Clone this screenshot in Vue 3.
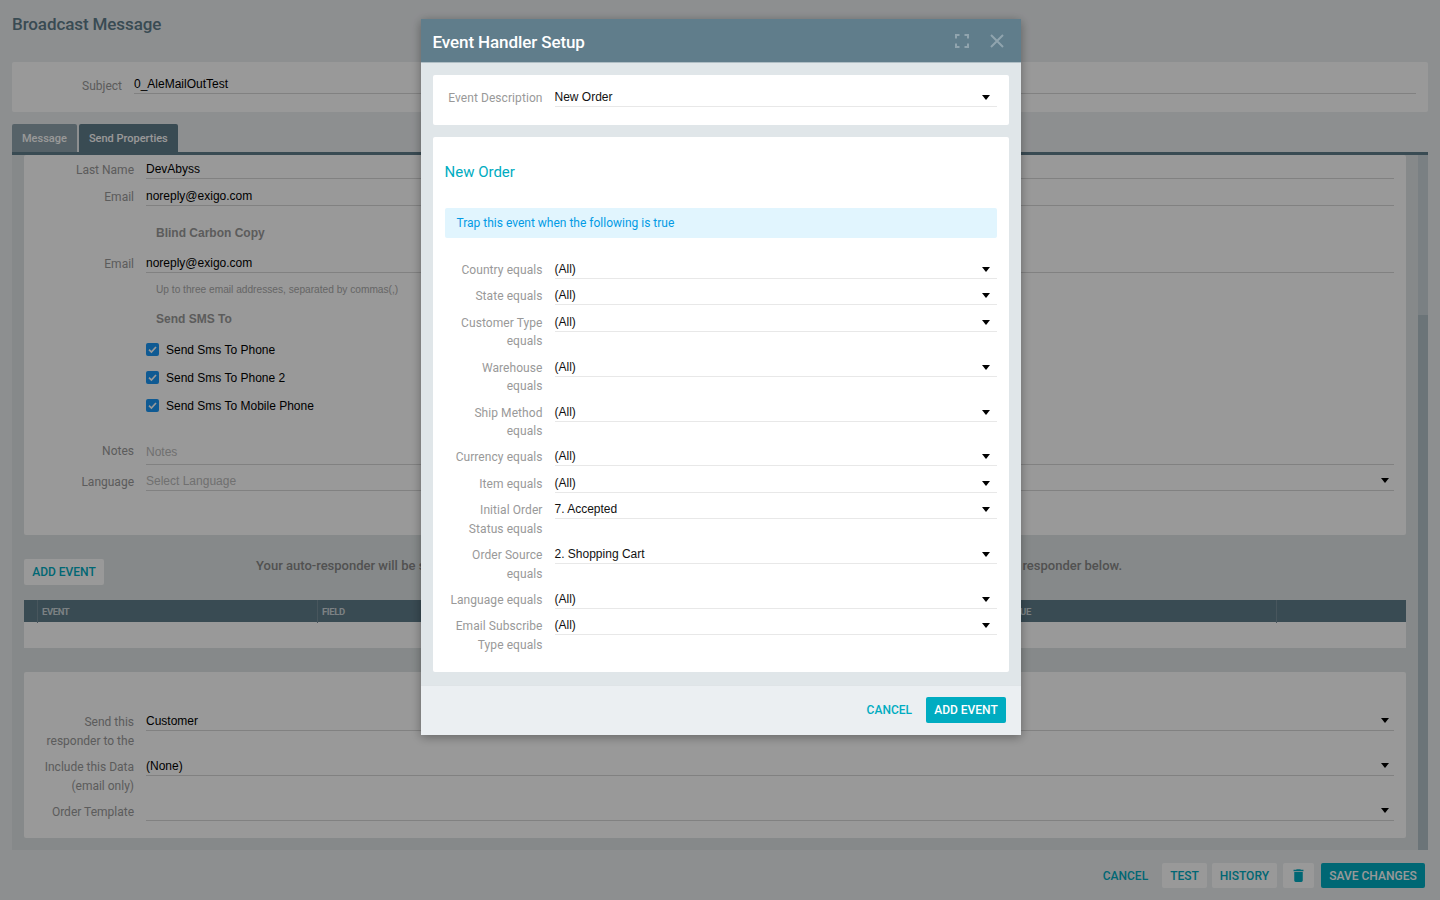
<script setup>
const backRows = [
  { label: 'Send this responder to the', value: 'Customer' },
  { label: 'Include this Data (email only)', value: '(None)' },
  { label: 'Order Template', value: '' }
]

const smsOptions = ['Send Sms To Phone', 'Send Sms To Phone 2', 'Send Sms To Mobile Phone']

const filters = [
  { label: 'Country equals', value: '(All)' },
  { label: 'State equals', value: '(All)' },
  { label: 'Customer Type equals', value: '(All)' },
  { label: 'Warehouse equals', value: '(All)' },
  { label: 'Ship Method equals', value: '(All)' },
  { label: 'Currency equals', value: '(All)' },
  { label: 'Item equals', value: '(All)' },
  { label: 'Initial Order Status equals', value: '7. Accepted' },
  { label: 'Order Source equals', value: '2. Shopping Cart' },
  { label: 'Language equals', value: '(All)' },
  { label: 'Email Subscribe Type equals', value: '(All)' }
]
</script>

<template>
  <div class="page">
    <h1 class="page-title">Broadcast Message</h1>

    <div class="subject-card">
      <label class="subject-label">Subject</label>
      <div class="line-input">0_AleMailOutTest</div>
    </div>

    <div class="tabs">
      <div class="tab">Message</div>
      <div class="tab active">Send Properties</div>
    </div>

    <div class="tab-body">
      <div class="scroll-area">
        <div class="card props-card">
          <div class="form-row">
            <label>Last Name</label>
            <div class="line-input">DevAbyss</div>
          </div>
          <div class="form-row">
            <label>Email</label>
            <div class="line-input">noreply@exigo.com</div>
          </div>
          <div class="section-title bcc">Blind Carbon Copy</div>
          <div class="form-row">
            <label>Email</label>
            <div class="line-input">noreply@exigo.com</div>
          </div>
          <div class="hint">Up to three email addresses, separated by commas(,)</div>
          <div class="section-title sms">Send SMS To</div>
          <div class="checks">
            <div v-for="opt in smsOptions" :key="opt" class="check-row">
              <span class="checkbox">
                <svg viewBox="0 0 13 13" width="13" height="13">
                  <path d="M3 6.700 5.400 9 10 4" fill="none" stroke="#fff" stroke-width="1.700" />
                </svg>
              </span>
              {{ opt }}
            </div>
          </div>
          <div class="form-row notes">
            <label>Notes</label>
            <div class="line-input placeholder">Notes</div>
          </div>
          <div class="form-row">
            <label>Language</label>
            <div class="line-input placeholder select">Select Language<i class="caret"></i></div>
          </div>
        </div>

        <div class="event-bar">
          <button class="btn btn-white">ADD EVENT</button>
          <div class="event-note">
            <span>Your auto-responder will be sent</span>
            <span>for this responder below.</span>
          </div>
        </div>

        <div class="event-table">
          <div class="table-head">
            <div class="th narrow"></div>
            <div class="th event">EVENT</div>
            <div class="th field">FIELD</div>
            <div class="th value">VALUE</div>
            <div class="th"></div>
          </div>
          <div class="table-empty"></div>
        </div>

        <div class="card responder-card">
          <div v-for="row in backRows" :key="row.label" class="form-row">
            <label>{{ row.label }}</label>
            <div class="line-input select">{{ row.value }}<i class="caret"></i></div>
          </div>
        </div>
      </div>
      <div class="scrollbar"><div class="thumb"></div></div>
    </div>

    <div class="page-actions">
      <button class="btn btn-text">CANCEL</button>
      <button class="btn btn-white">TEST</button>
      <button class="btn btn-white">HISTORY</button>
      <button class="btn btn-white trash">
        <svg viewBox="0 0 24 24" width="17" height="17">
          <path fill="#00acc1" d="M6 19a2 2 0 0 0 2 2h8a2 2 0 0 0 2-2V7H6v12zM19 4h-3.500l-1-1h-5l-1 1H5v2h14V4z" />
        </svg>
      </button>
      <button class="btn btn-primary save">SAVE CHANGES</button>
    </div>
  </div>

  <div class="overlay"></div>

  <div class="modal">
    <div class="modal-header">
      <span class="modal-title">Event Handler Setup</span>
      <svg class="modal-icon" viewBox="0 0 14 14" width="14" height="14">
        <path d="M1 4.500V1h3.500M9.500 1H13v3.500M13 9.500V13H9.500M4.500 13H1V9.500" fill="none" stroke="#90a4ae" stroke-width="2" />
      </svg>
      <svg class="modal-icon close" viewBox="0 0 14 14" width="14" height="14">
        <path d="M1 1l12 12M13 1 1 13" fill="none" stroke="#90a4ae" stroke-width="2" />
      </svg>
    </div>

    <div class="modal-body">
      <div class="modal-card desc-card">
        <div class="modal-row">
          <label>Event Description</label>
          <div class="modal-select">New Order<i class="caret"></i></div>
        </div>
      </div>

      <div class="modal-card filter-card">
        <h2 class="filter-title">New Order</h2>
        <div class="alert">Trap this event when the following is true</div>
        <div class="filter-list">
          <div v-for="f in filters" :key="f.label" class="modal-row">
            <label>{{ f.label }}</label>
            <div class="modal-select">{{ f.value }}<i class="caret"></i></div>
          </div>
        </div>
      </div>
    </div>

    <div class="modal-footer">
      <button class="btn btn-text">CANCEL</button>
      <button class="btn btn-primary">ADD EVENT</button>
    </div>
  </div>
</template>

<style>
html,
body {
  margin: 0;
  background: #eceff1;
}
</style>

<style scoped>
.page {
  height: 900px;
  box-sizing: border-box;
  padding: 0 12px;
  background: #eceff1;
  font-family: Roboto, "Liberation Sans", sans-serif;
  font-size: 12px;
  overflow: hidden;
}
.page-title {
  margin: 0;
  padding-top: 14px;
  height: 62px;
  box-sizing: border-box;
  font-size: 17px;
  line-height: 20px;
  font-weight: 500;
  letter-spacing: -0.1px;
  color: #607d8b;
}
.subject-card {
  display: grid;
  grid-template-columns: 110px 1fr;
  column-gap: 12px;
  height: 50px;
  box-sizing: border-box;
  padding: 13px 12px 0 0;
  background: #fff;
  border-radius: 2px;
}
.subject-label {
  text-align: right;
  color: #999;
  line-height: 19px;
  padding-top: 2px;
}
.tabs {
  display: flex;
  gap: 2px;
  margin-top: 12px;
  height: 28px;
}
.tab {
  padding: 0 10px;
  line-height: 29px;
  font-size: 11px;
  font-weight: 500;
  color: #fff;
  background: #90a4ae;
  border-radius: 2px 2px 0 0;
}
.tab.active {
  background: #607d8b;
}
.tab-body {
  display: flex;
  height: 698px;
  box-sizing: border-box;
  border-top: 3px solid #607d8b;
  background: #dfe5e6;
}
.scroll-area {
  flex: 1;
  padding: 0 12px;
  min-width: 0;
}
.scrollbar {
  width: 10px;
  background: #cbd5da;
  padding-top: 160px;
  box-sizing: border-box;
}
.thumb {
  height: 100%;
  background: #b2c1c8;
}
.card {
  background: #fff;
  border-radius: 2px;
}
.props-card {
  height: 380px;
  box-sizing: border-box;
  padding-top: 5px;
}
.form-row {
  display: grid;
  grid-template-columns: 98px 1fr;
  column-gap: 12px;
  padding: 0 12px;
  margin-bottom: 7px;
}
.form-row label {
  text-align: right;
  color: #999;
  line-height: 18.500px;
  padding-top: 1px;
}
.line-input {
  position: relative;
  height: 18px;
  line-height: 19px;
  font-family: "Liberation Sans", Arial, sans-serif;
  font-size: 12px;
  color: #000;
  border-bottom: 1px solid #d8d8d8;
}
.line-input.placeholder {
  color: #bbb;
}
.section-title {
  margin-left: 132px;
  font-family: "Liberation Sans", Arial, sans-serif;
  font-size: 12px;
  font-weight: 700;
  line-height: 16px;
  color: #999;
}
.section-title.bcc {
  margin-top: 18.500px;
  margin-bottom: 13.500px;
}
.section-title.sms {
  margin-top: 14px;
}
.hint {
  margin: 9px 0 0 132px;
  font-family: "Liberation Sans", Arial, sans-serif;
  font-size: 10.170px;
  line-height: 14px;
  color: #aaa;
}
.checks {
  margin: 9px 0 0 122px;
}
.check-row {
  display: flex;
  align-items: center;
  gap: 7px;
  height: 28px;
  font-family: "Liberation Sans", Arial, sans-serif;
  font-size: 12px;
  color: #000;
}
.checkbox {
  width: 13px;
  height: 13px;
  border-radius: 2px;
  background: #1996f5;
  display: block;
}
.checkbox svg {
  display: block;
}
.form-row.notes {
  margin-top: 23px;
  margin-bottom: 7px;
}
.form-row.notes label {
  margin-top: -2px;
}
.form-row.notes .line-input {
  height: 21px;
}
.select .caret,
.modal-select .caret {
  position: absolute;
  top: 6px;
  width: 0;
  height: 0;
  border-left: 4.500px solid transparent;
  border-right: 4.500px solid transparent;
  border-top: 5px solid #000;
}
.select .caret {
  right: 5px;
}
.event-bar {
  display: flex;
  height: 65px;
  box-sizing: border-box;
  padding-top: 24px;
}
.event-bar .btn-white {
  width: 80px;
  height: 26px;
  padding: 0;
}
.event-note {
  flex: 1;
  display: flex;
  justify-content: space-between;
  margin: 0 284px 0 152px;
  height: 22px;
  line-height: 13px;
  font-size: 13px;
  font-weight: 500;
  color: #888;
}
.event-table {
  height: 72px;
}
.table-head {
  display: grid;
  grid-template-columns: 14px 280px 682px 277px 1fr;
  height: 22px;
  background: #607d8b;
}
.th {
  padding-left: 4px;
  border-right: 1px solid #78909c;
  font-size: 9.500px;
  font-weight: 700;
  line-height: 23px;
  letter-spacing: -0.400px;
  color: #cfd8dc;
}
.th.narrow {
  padding: 0;
}
.th:last-child {
  border-right: 0;
}
.table-empty {
  height: 26px;
  background: #fff;
}
.responder-card {
  height: 166px;
  box-sizing: border-box;
  padding-top: 40px;
}
.page-actions {
  display: flex;
  justify-content: flex-end;
  align-items: center;
  gap: 5px;
  margin-top: 13px;
  padding-right: 3px;
}
.btn {
  border: 0;
  border-radius: 2px;
  height: 25px;
  padding: 0 8px;
  font-family: Roboto, "Liberation Sans", sans-serif;
  font-size: 12px;
  font-weight: 500;
  white-space: nowrap;
  cursor: pointer;
}
.btn-white {
  background: #fff;
  color: #00acc1;
}
.btn-text {
  background: transparent;
  color: #00acc1;
  padding: 0 9px 0 0;
}
.btn-primary {
  background: #00acc1;
  color: #fff;
}
.save {
  width: 104px;
  padding: 0;
}
.trash {
  width: 31px;
  margin-left: 1px;
  margin-right: 2px;
  padding: 0;
}
.trash svg {
  display: block;
  margin: 0 auto;
}
.overlay {
  position: fixed;
  inset: 0;
  background: rgba(0, 0, 0, 0.4);
}
.modal {
  position: fixed;
  left: 421px;
  top: 19px;
  width: 600px;
  font-family: Roboto, "Liberation Sans", sans-serif;
  font-size: 12px;
  box-shadow: 0 2px 10px rgba(0, 0, 0, 0.35);
}
.modal-header {
  display: flex;
  align-items: center;
  height: 41px;
  padding: 2px 17px 0 11.500px;
  background: #607d8b;
  border-bottom: 1px solid #b0bec5;
}
.modal-title {
  flex: 1;
  font-size: 17px;
  font-weight: 500;
  letter-spacing: -0.100px;
  color: #fff;
}
.modal-icon {
  margin-top: -2px;
}
.modal-icon.close {
  margin-left: 21px;
}
.modal-body {
  padding: 12px;
  background: #e0e6e9;
  height: 622px;
  box-sizing: border-box;
}
.modal-card {
  background: #fff;
  border-radius: 2px;
  padding: 0 12px;
}
.desc-card {
  height: 50px;
  box-sizing: border-box;
  padding-top: 14px;
  margin-bottom: 12px;
}
.desc-card .modal-row {
  margin-bottom: 0;
}
.filter-card {
  height: 535px;
  box-sizing: border-box;
  padding-top: 25px;
}
.filter-title {
  margin: 0 0 0 -0.500px;
  font-size: 15px;
  font-weight: 400;
  line-height: 20px;
  color: #00acc1;
}
.alert {
  margin-top: 26px;
  height: 30px;
  padding-left: 11.500px;
  line-height: 30px;
  background: #e1f5fe;
  border-radius: 2px;
  color: #039be5;
}
.filter-list {
  margin-top: 23px;
}
.modal-row {
  display: grid;
  grid-template-columns: 97.500px 1fr;
  column-gap: 12px;
  margin-bottom: 7.900px;
}
.modal-row label {
  text-align: right;
  color: #999;
  line-height: 18.500px;
  letter-spacing: 0.070px;
}
.modal-select {
  position: relative;
  height: 17px;
  line-height: 16px;
  font-family: "Liberation Sans", Arial, sans-serif;
  font-size: 12px;
  color: #111;
  border-bottom: 1px solid #e8e8e8;
}
.modal-select .caret {
  right: 7px;
}
.modal-footer {
  display: flex;
  justify-content: flex-end;
  align-items: center;
  gap: 5px;
  height: 50px;
  padding: 0 15px 2px 0;
  box-sizing: border-box;
  background: #ebeff2;
  border-top: 1px solid #dfe4e7;
}
.modal-footer .btn-primary {
  height: 26px;
  width: 80px;
  padding: 0;
}
</style>
